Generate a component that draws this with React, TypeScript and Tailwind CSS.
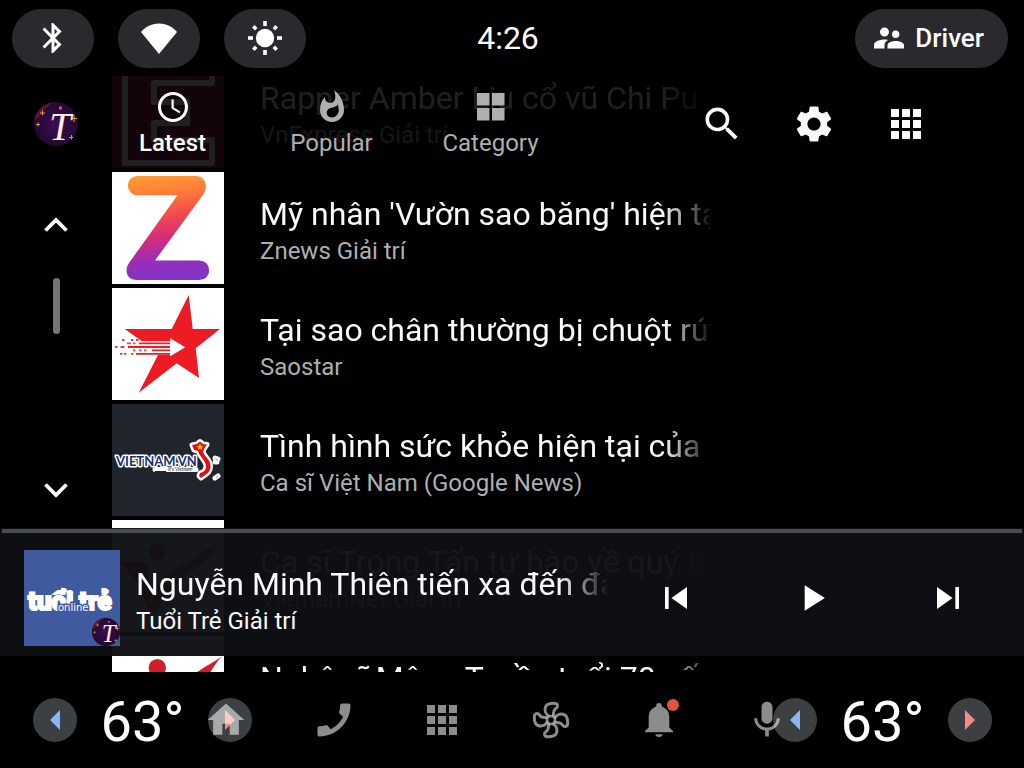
import type { ReactNode } from "react";
import {
  MdBluetooth,
  MdCall,
  MdHome,
  MdMic,
  MdPlayArrow,
  MdSchedule,
  MdSearch,
  MdSettings,
  MdSkipNext,
  MdSkipPrevious,
  MdSupervisorAccount,
  MdWhatshot,
} from "react-icons/md";

function WifiIcon() {
  return (
    <svg viewBox="0 0 36 31" className="h-[31px] w-9" fill="currentColor">
      <path d="M0 9C4 4.500 10 .5 18 .5S32 4.500 36 9L18 31Z" />
    </svg>
  );
}

function BrightnessIcon() {
  return (
    <svg viewBox="-17 -17 34 34" className="size-[34px]" fill="currentColor">
      <circle r="9.200" />
      {[0, 90, 180, 270].map((angle) => (
        <rect key={angle} x="-1.800" y="-17" width="3.600" height="5" transform={`rotate(${angle})`} />
      ))}
      {[45, 135, 225, 315].map((angle) => (
        <rect key={angle} x="-1.800" y="-16.500" width="3.600" height="4" transform={`rotate(${angle})`} />
      ))}
    </svg>
  );
}

function AppsIcon() {
  return (
    <svg viewBox="0 0 30 30" className="size-[30px]" fill="currentColor">
      {[0, 11, 22].map((y) =>
        [0, 11, 22].map((x) => <rect key={`${x}-${y}`} x={x} y={y} width="8" height="8" />)
      )}
    </svg>
  );
}

function CategoryIcon() {
  return (
    <svg viewBox="0 0 36 36" className="size-9" fill="currentColor">
      <path d="M4 4h12.500v12.500H4zM19 4h12.500v12.500H19zM4 19h12.500v12.500H4zM19 19h12.500v12.500H19z" />
    </svg>
  );
}

function ChevronIcon({ down = false }: { down?: boolean }) {
  return (
    <svg viewBox="0 0 24 16" className="h-4 w-6" fill="none" stroke="currentColor" strokeWidth="3.800">
      <path d={down ? "M1.500 2.500 12 13 22.500 2.500" : "M1.500 13.500 12 3 22.500 13.500"} />
    </svg>
  );
}

function FanIcon() {
  return (
    <svg viewBox="-20 -20 40 40" className="size-10" fill="none" stroke="currentColor" strokeWidth="3">
      <circle r="4" strokeWidth="2.600" />
      {[0, 90, 180, 270].map((angle) => (
        <path
          key={angle}
          transform={`rotate(${angle})`}
          d="M-2-4C-6-6-6.500-10-5.500-13C-4.500-16-1-16.700 3-16.700C7-16.700 7.200-13.500 5.500-12C3-10.500 2-8 2.500-4"
        />
      ))}
    </svg>
  );
}

function BellIcon() {
  return (
    <svg viewBox="0 0 28 34" className="h-[34px] w-7" fill="currentColor">
      <path d="M14 0a2.800 2.800 0 0 1 2.800 2.800v1C21.500 5 24.300 9 24.300 14v10.500L28 28v1.300H0V28l3.700-3.500V14c0-5 2.800-9 7.500-10.200v-1A2.800 2.800 0 0 1 14 0Z" />
      <path d="M10.500 31.200h7a3.500 2.800 0 0 1-7 0Z" />
    </svg>
  );
}

function AppLogo({ className }: { className: string }) {
  return (
    <svg viewBox="0 0 44 44" className={className} role="img" aria-label="App logo">
      <defs>
        <radialGradient id="logo-bg">
          <stop offset="0" stopColor="#400a55" />
          <stop offset="1" stopColor="#210a30" />
        </radialGradient>
        <clipPath id="logo-clip">
          <circle cx="22" cy="22" r="22" />
        </clipPath>
      </defs>
      <g clipPath="url(#logo-clip)">
        <rect width="44" height="44" fill="url(#logo-bg)" />
        <path d="M0 0h19C16 4 12 5 9 10c-3 4-5 6-9 9Z" fill="#5e1234" />
        <circle cx="26.500" cy="6" r="1.700" fill="#ff3d78" />
        <path
          d="M8.500 8.500v5M6 11h5M4 20.500v4M2 22.500h4M37.500 33v5M35 35.500h5M40 13v7M36.500 16.500h7"
          stroke="#d69a4a"
          strokeWidth="1"
        />
        <text
          x="26"
          y="37.500"
          textAnchor="middle"
          fontFamily="Liberation Serif, serif"
          fontStyle="italic"
          fontSize="39"
          fill="#fdeedd"
        >
          T
        </text>
      </g>
    </svg>
  );
}

function VnExpressCover() {
  return (
    <svg viewBox="0 0 112 112" className="size-28 shrink-0">
      <rect width="112" height="112" fill="#9f224e" />
      <path
        d="M13 5H100V27H42V46H75V67H42V84H100V107H13Z"
        fill="none"
        stroke="#fff"
        strokeWidth="6"
        strokeLinejoin="round"
      />
    </svg>
  );
}

function ZnewsCover() {
  return (
    <svg viewBox="0 0 112 112" className="size-28 shrink-0">
      <defs>
        <linearGradient id="znews" x1=".4" y1="0" x2=".5" y2="1">
          <stop offset="0" stopColor="#ff9a35" />
          <stop offset=".18" stopColor="#ff7a38" />
          <stop offset=".4" stopColor="#f0474f" />
          <stop offset=".58" stopColor="#d62d7b" />
          <stop offset=".8" stopColor="#9a2cb8" />
          <stop offset="1" stopColor="#7f35c8" />
        </linearGradient>
      </defs>
      <rect width="112" height="112" fill="#fff" />
      <path
        d="M25.500 4H84C92.500 4 96.500 13 92 21.500L43 88.500H87.500a9.500 9.500 0 0 1 0 19.500H25C14.500 108 12 98 17 91L65.500 23.300H25.500a9.500 9.500 0 0 1 0-19.300Z"
        fill="url(#znews)"
      />
    </svg>
  );
}

function SaostarCover() {
  return (
    <svg viewBox="0 0 112 112" className="size-28 shrink-0">
      <rect width="112" height="112" fill="#fff" />
      <path
        d="M76.700 7 80.700 41H108L83.700 60.300 87 90 64.700 75.300 26.700 104.700 46 67 30.700 53.700 12.700 41H59.700Z"
        fill="#ed1c24"
      />
      <path d="M28 53.300H58.300V50.300L73.300 59.300 58.300 68.300V66.700H28Z" fill="#fff" />
      <g stroke="#ed1c24" strokeWidth="1.800">
        <path d="M27 55.300H58M16 59H58M40 62.300H58M24 65.800H58" />
        <path
          d="M10 52h2.500M19 52h2.500M24 52h2.500M15 55.300h4M21 55.300h2.500M3 59h2.500M8.500 59h4M21 62.300h2.500M27 62.300h2.500M32 62.300h2.500M8 65.800h2.500M12 65.800h2.500M19 65.800h2.500"
          opacity=".85"
        />
      </g>
    </svg>
  );
}

function VietnamVnCover() {
  return (
    <svg viewBox="0 0 112 112" className="size-28 shrink-0">
      <rect width="112" height="112" fill="#20242d" />
      <path d="M43 65.500H84" stroke="#fff" strokeWidth="5" strokeLinecap="round" />
      <text
        x="4"
        y="61.500"
        fontFamily="Lato, sans-serif"
        fontWeight="700"
        fontSize="13"
        fill="#1d2f73"
        stroke="#fff"
        strokeWidth="3"
        strokeLinejoin="round"
        paintOrder="stroke"
      >
        VIETNAM.VN
      </text>
      <path d="M43 67.500H54" stroke="#20242d" strokeWidth="1" />
      <text x="56" y="67" fontFamily="Lato, sans-serif" fontStyle="italic" fontSize="5" fill="#20242d">
        It's Vietnam
      </text>
      <path
        d="M80 41 85 40 88 37.500 91 40 95 40.500 92 45 91 48C93 53 98.500 56 98.500 62C98.500 69 94 70 89 74L87 72 88 69C92 68 94 66 94 62C94 57 88 53 86 47L82 46Z"
        fill="#e60d12"
        stroke="#fff"
        strokeWidth="5"
        strokeLinejoin="round"
        paintOrder="stroke"
      />
      <path d="M88 39.500 89 42 91.500 42 89.500 43.500 90 46 88 44.500 86 46 86.500 43.500 84.500 42 87 42Z" fill="#ffc928" />
      <g stroke="#fff" strokeWidth="5" strokeLinecap="round">
        <path d="M103 54l3 1M103 74l3-2M103 58h2" />
      </g>
      <path d="M103 55l3 1M104 74l2-2" stroke="#e8838a" strokeWidth="1" />
    </svg>
  );
}

function VietnamnetCover() {
  return (
    <svg viewBox="0 0 112 112" className="size-28 shrink-0">
      <rect width="112" height="112" fill="#fff" />
      <circle cx="45.300" cy="31.700" r="8.700" fill="#cf2027" />
      <path
        d="M109.500 20.500C104 27 101 32 98.700 35.700C84 50 50 70 44 94L36 88C28 70 22 56 8 42H36L38 74C50 56 68 46 86 35.500C94 30 102 26 109.500 20.500Z"
        fill="#cf2027"
      />
    </svg>
  );
}

function TuoiTreCover() {
  return (
    <svg viewBox="0 0 96 96" className="size-24">
      <rect width="96" height="96" fill="#3f5a9f" />
      <g
        fontFamily="Roboto, sans-serif"
        fontWeight="900"
        fontSize="26"
        fill="#fff"
        stroke="#fff"
        strokeWidth="2"
      >
        <text x="4" y="60">
          tuổi
        </text>
        <text x="55" y="60">
          trẻ
        </text>
      </g>
      <text
        x="34"
        y="61"
        fontFamily="DejaVu Sans, sans-serif"
        fontSize="10"
        fill="#fff"
        stroke="#3f5a9f"
        strokeWidth="3"
        paintOrder="stroke"
      >
        online
      </text>
    </svg>
  );
}

type Article = {
  title: string;
  source: string;
  cover: ReactNode;
};

const articles: Article[] = [
  { title: "Rapper Amber Liu cổ vũ Chi Pu", source: "VnExpress Giải trí", cover: <VnExpressCover /> },
  { title: "Mỹ nhân 'Vườn sao băng' hiện tại", source: "Znews Giải trí", cover: <ZnewsCover /> },
  { title: "Tại sao chân thường bị chuột rút", source: "Saostar", cover: <SaostarCover /> },
  {
    title: "Tình hình sức khỏe hiện tại của",
    source: "Ca sĩ Việt Nam (Google News)",
    cover: <VietnamVnCover />,
  },
  { title: "Ca sĩ Trọng Tấn tự hào về quý tử", source: "VietnamNet Giải trí", cover: <VietnamnetCover /> },
  { title: "Nghệ sĩ Mộng Tuyền tuổi 70 sống", source: "VietnamNet Giải trí", cover: <VietnamnetCover /> },
];

const tabs = [
  { label: "Latest", icon: <MdSchedule className="size-9" />, active: true },
  { label: "Popular", icon: <MdWhatshot className="size-9" />, active: false },
  { label: "Category", icon: <CategoryIcon />, active: false },
];

const navItems = [
  { label: "Home", icon: <MdHome className="size-11" /> },
  { label: "Phone", icon: <MdCall className="size-11 -scale-x-100" /> },
  { label: "Apps", icon: <AppsIcon /> },
  { label: "Climate", icon: <FanIcon /> },
  { label: "Notifications", icon: <BellIcon />, badge: true },
  { label: "Assistant", icon: <MdMic className="size-11" /> },
];

function StatusPill({ label, children }: { label: string; children: ReactNode }) {
  return (
    <button
      aria-label={label}
      className="flex h-[59px] w-[82px] items-center justify-center rounded-full bg-[#292a2e]"
    >
      {children}
    </button>
  );
}

function StatusBar() {
  return (
    <header className="grid h-[76px] shrink-0 grid-cols-[1fr_auto_1fr] items-center pr-4 pl-3">
      <div className="flex gap-6">
        <StatusPill label="Bluetooth">
          <MdBluetooth className="size-9" />
        </StatusPill>
        <StatusPill label="Wi-Fi">
          <WifiIcon />
        </StatusPill>
        <StatusPill label="Brightness">
          <BrightnessIcon />
        </StatusPill>
      </div>
      <time className="pr-1 text-[32px]">4:26</time>
      <button className="flex h-[59px] items-center gap-2 justify-self-end rounded-full bg-[#292a2e] pr-6 pl-4 text-[26px] font-medium">
        <MdSupervisorAccount className="size-9" />
        Driver
      </button>
    </header>
  );
}

function AppBar() {
  return (
    <div className="absolute inset-x-0 top-0 flex h-24 items-center bg-black/88 pr-[72px] pl-[34px]">
      <AppLogo className="size-11" />
      <nav className="ml-[15px] flex pb-0.5">
        {tabs.map((tab) => (
          <button
            key={tab.label}
            className={`flex w-[159px] flex-col items-center gap-1 text-2xl leading-7 ${
              tab.active ? "font-medium text-white" : "text-[#afafaf]"
            }`}
          >
            {tab.icon}
            {tab.label}
          </button>
        ))}
      </nav>
      <div className="ml-auto flex text-[#f8f9fa]">
        <button aria-label="Search" className="flex h-16 w-[92px] items-center justify-center">
          <MdSearch className="size-11" />
        </button>
        <button aria-label="Settings" className="flex h-16 w-[92px] items-center justify-center">
          <MdSettings className="size-11" />
        </button>
        <button aria-label="All apps" className="flex h-16 w-[92px] items-center justify-center">
          <AppsIcon />
        </button>
      </div>
    </div>
  );
}

function ScrollRail() {
  return (
    <div className="flex w-28 shrink-0 flex-col items-center pt-[127px] pb-40">
      <button aria-label="Scroll up" className="flex size-11 items-center justify-center">
        <ChevronIcon />
      </button>
      <div className="mt-[31px] h-14 w-[7px] rounded-full bg-[#757575]" />
      <button aria-label="Scroll down" className="mt-auto flex size-11 items-center justify-center">
        <ChevronIcon down />
      </button>
    </div>
  );
}

function ArticleRow({ title, source, cover }: Article) {
  return (
    <li>
      <button className="flex w-full items-center gap-9 text-left">
        {cover}
        <span className="min-w-0 flex-1 pt-1">
          <span className="block overflow-hidden text-[32px] leading-[42px] whitespace-nowrap text-[#f8f9fa] [mask-image:linear-gradient(to_left,transparent,black_48px)]">
            {title}
          </span>
          <span className="block text-2xl leading-8 text-[#afafaf]">{source}</span>
        </span>
      </button>
    </li>
  );
}

function Player() {
  return (
    <section className="absolute inset-x-0 bottom-4 flex h-32 flex-col bg-[#0e0f13]/97 pt-px">
      <div
        role="progressbar"
        aria-label="Playback position"
        aria-valuenow={0}
        className="mx-0.5 h-1 shrink-0 bg-[#4a4d50]"
      />
      <div className="flex flex-1 items-center pt-1.5 pr-2 pl-6">
        <div className="relative">
          <TuoiTreCover />
          <AppLogo className="absolute right-0 bottom-0 size-7" />
        </div>
        <div className="ml-4 min-w-0 flex-1 pt-1">
          <p className="overflow-hidden text-[32px] leading-[42px] whitespace-nowrap text-[#f8f9fa] [mask-image:linear-gradient(to_left,transparent,black_48px)]">
            Nguyễn Minh Thiên tiến xa đến đâu
          </p>
          <p className="text-2xl leading-8 text-[#f8f9fa]">Tuổi Trẻ Giải trí</p>
        </div>
        <div className="flex">
          <button aria-label="Previous" className="flex h-24 w-[136px] items-center justify-center">
            <MdSkipPrevious className="size-11" />
          </button>
          <button aria-label="Play" className="flex h-24 w-[136px] items-center justify-center">
            <MdPlayArrow className="size-11" />
          </button>
          <button aria-label="Next" className="flex h-24 w-[136px] items-center justify-center">
            <MdSkipNext className="size-11" />
          </button>
        </div>
      </div>
    </section>
  );
}

function ClimateControl({ side }: { side: string }) {
  return (
    <div className="flex w-[219px] shrink-0 items-center justify-between">
      <button
        aria-label={`${side} cooler`}
        className="flex size-11 items-center justify-center rounded-full bg-[#3c4043] text-[#8ab4f8]"
      >
        <svg viewBox="0 0 10 20" className="h-5 w-2.5" fill="currentColor">
          <path d="M10 0v20L0 10Z" />
        </svg>
      </button>
      <span className="pt-1 text-[56px] leading-none">63°</span>
      <button
        aria-label={`${side} warmer`}
        className="flex size-11 items-center justify-center rounded-full bg-[#3c4043] text-[#f28b82]"
      >
        <svg viewBox="0 0 10 20" className="h-5 w-2.5" fill="currentColor">
          <path d="M0 0v20L10 10Z" />
        </svg>
      </button>
    </div>
  );
}

function SystemBar() {
  return (
    <footer className="flex h-24 shrink-0 items-center pr-8 pl-[33px]">
      <ClimateControl side="Driver" />
      {/* the nav strip runs under both climate controls */}
      <nav className="-mr-12 -ml-20 flex flex-1">
        {navItems.map((item) => (
          <button
            key={item.label}
            aria-label={item.label}
            className="flex h-16 flex-1 items-center justify-center text-white/55"
          >
            <span className="relative">
              {item.icon}
              {item.badge ? (
                <span className="absolute -top-1 -right-1.5 size-3 rounded-full bg-[#e35141]" />
              ) : null}
            </span>
          </button>
        ))}
      </nav>
      <ClimateControl side="Passenger" />
    </footer>
  );
}

export default function App() {
  return (
    <div className="flex h-screen flex-col overflow-hidden bg-black font-[Roboto,sans-serif] text-white">
      <StatusBar />
      <main className="relative flex min-h-0 flex-1 overflow-hidden">
        <ScrollRail />
        <ul className="-mt-5 flex min-w-0 flex-1 flex-col gap-1 pr-78">
          {articles.map((article) => (
            <ArticleRow key={article.title} {...article} />
          ))}
        </ul>
        <AppBar />
        <Player />
      </main>
      <SystemBar />
    </div>
  );
}
